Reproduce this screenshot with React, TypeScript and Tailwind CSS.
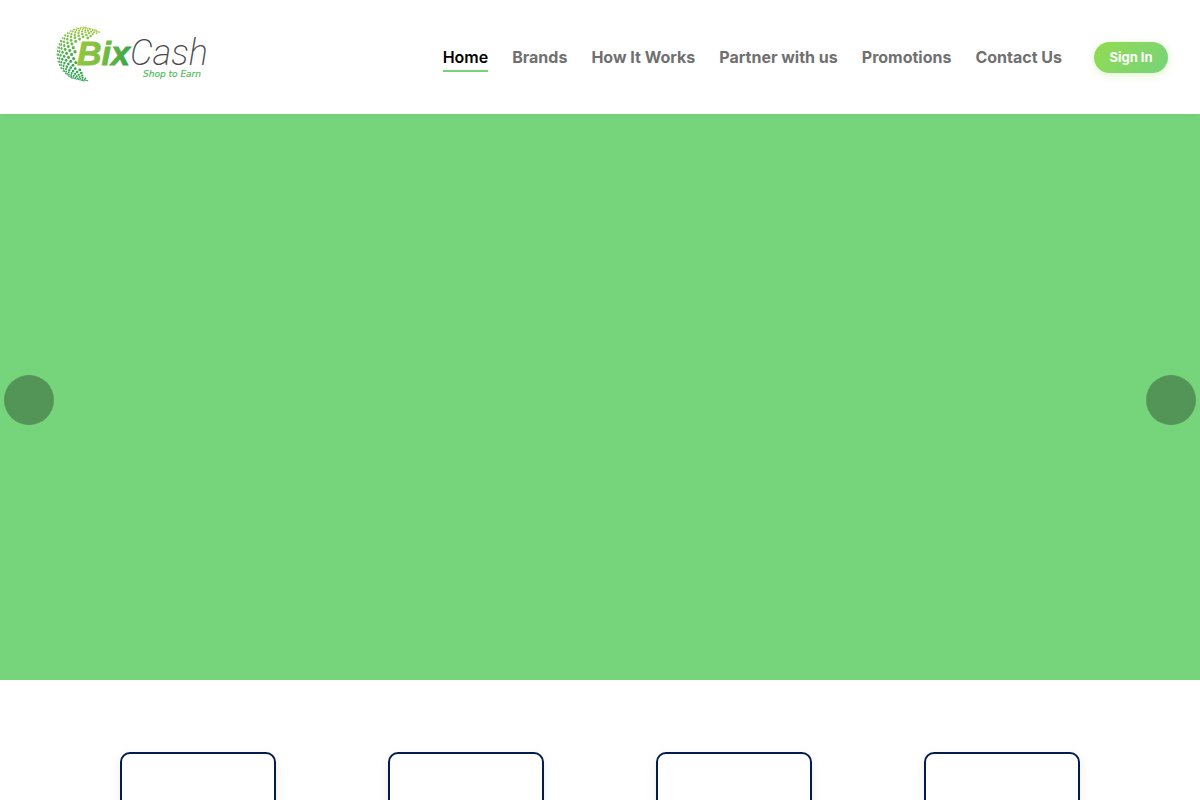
const navItems = ["Home", "Brands", "How It Works", "Partner with us", "Promotions", "Contact Us"];
const cards = ["one", "two", "three", "four"];

type Dot = { x: number; y: number; rx: number; ry: number };

// Staggered lattice of dots on a tilted globe, kept where it forms the left crescent.
const toRad = Math.PI / 180;
const tilt = 14 * toRad;
const dots: Dot[] = Array.from({ length: 21 }, (_, row) => (row - 10) * 7.5)
  .flatMap((lat, row) =>
    Array.from({ length: 13 }, (_, col) => {
      const lon = col * 13 + (row % 2) * 6.5 + 5;
      const gx = -27 * Math.cos(lat * toRad) * Math.cos(lon * toRad);
      const gy = 27 * Math.sin(lat * toRad);
      const depth = Math.sqrt(Math.max(0, 1 - (gx * gx + gy * gy) / 729));
      return {
        x: 28 + gx * Math.cos(tilt) - gy * Math.sin(tilt),
        y: 28 + gx * Math.sin(tilt) + gy * Math.cos(tilt),
        rx: 0.4 + depth * 1.3,
        ry: 0.4 + Math.cos(lat * toRad) * (0.7 + depth * 0.7),
      };
    }),
  )
  .filter(({ x, y }) => Math.hypot(x - 48, y - 33) > 26 && x < 48 && (x < 20.5 || y < 13 || y > 41));

function Logo() {
  return (
    <svg viewBox="0 0 152 58" className="h-[58px] w-[152px]" role="img" aria-label="BixCash Shop to Earn">
      <defs>
        <linearGradient id="globe" gradientUnits="userSpaceOnUse" x1="30" y1="0" x2="22" y2="56">
          <stop offset="0" stopColor="#a9cf45" />
          <stop offset="0.5" stopColor="#4fb048" />
          <stop offset="1" stopColor="#279f50" />
        </linearGradient>
        <linearGradient id="word" gradientUnits="userSpaceOnUse" x1="22" y1="24" x2="74" y2="36">
          <stop offset="0" stopColor="#92c83e" />
          <stop offset="0.4" stopColor="#7fbf40" />
          <stop offset="1" stopColor="#36a249" />
        </linearGradient>
      </defs>
      <g fill="url(#globe)">
        {dots.map((d, i) => (
          <ellipse key={i} cx={d.x} cy={d.y} rx={d.rx} ry={d.ry} />
        ))}
      </g>
      <text
        x="21"
        y="39"
        fill="url(#word)"
        stroke="url(#word)"
        strokeWidth="0.8"
        className="font-['Liberation_Sans',sans-serif] text-[34px] font-bold italic"
      >
        Bix
      </text>
      <text x="74" y="39" fill="#4a4a4c" className="font-['Roboto',sans-serif] text-[36px] font-extralight italic">
        Cash
      </text>
      <text
        x="87"
        y="51"
        fill="#4fbd5c"
        stroke="#4fbd5c"
        strokeWidth="0.2"
        className="font-['DejaVu_Sans',sans-serif] text-[9px] italic"
      >
        Shop to Earn
      </text>
    </svg>
  );
}

export default function App() {
  return (
    <div className="min-h-screen overflow-x-hidden bg-white font-['Inter',sans-serif]">
      <header className="relative z-10 flex h-[114px] items-center justify-between bg-white pr-8 pl-14 shadow-[0_2px_8px_rgba(0,0,0,0.04)]">
        <a href="#home" className="mb-1">
          <Logo />
        </a>
        <div className="flex items-center gap-8">
          <nav className="flex items-center gap-6">
            {navItems.map((item, i) => (
              <a
                key={item}
                href="#home"
                aria-current={i === 0 ? "page" : undefined}
                className={
                  i === 0
                    ? "border-b-2 border-[#76d37a] pt-0.5 text-base leading-[26px] font-semibold whitespace-nowrap text-black"
                    : "border-b-2 border-transparent pt-0.5 text-base leading-[26px] font-bold whitespace-nowrap text-[#707070]"
                }
              >
                {item}
              </a>
            ))}
          </nav>
          <button
            type="button"
            className="h-[31px] w-[74px] rounded-full bg-linear-135 from-[#93db4d] to-[#76d37a] pt-0.5 text-[13px] font-bold whitespace-nowrap text-white shadow-[0_2px_8px_rgba(147,219,77,0.3)]"
          >
            Sign In
          </button>
        </div>
      </header>

      <main>
        <section aria-label="Highlights" className="flex h-[566px] items-center justify-between bg-[#76d57b] px-1 pt-1.5">
          <button type="button" aria-label="Previous slide" className="size-[50px] rounded-full bg-[#539557]" />
          <button type="button" aria-label="Next slide" className="size-[50px] rounded-full bg-[#539557]" />
        </section>

        <section aria-label="Brands" className="grid h-[120px] grid-cols-4 justify-items-center overflow-hidden px-16 pt-[72px]">
          {cards.map((card) => (
            <div
              key={card}
              className="h-[156px] w-[156px] rounded-[10px] border-2 border-[#021c4d] bg-white shadow-[0_4px_12px_rgba(0,0,0,0.08)]"
            />
          ))}
        </section>
      </main>
    </div>
  );
}
